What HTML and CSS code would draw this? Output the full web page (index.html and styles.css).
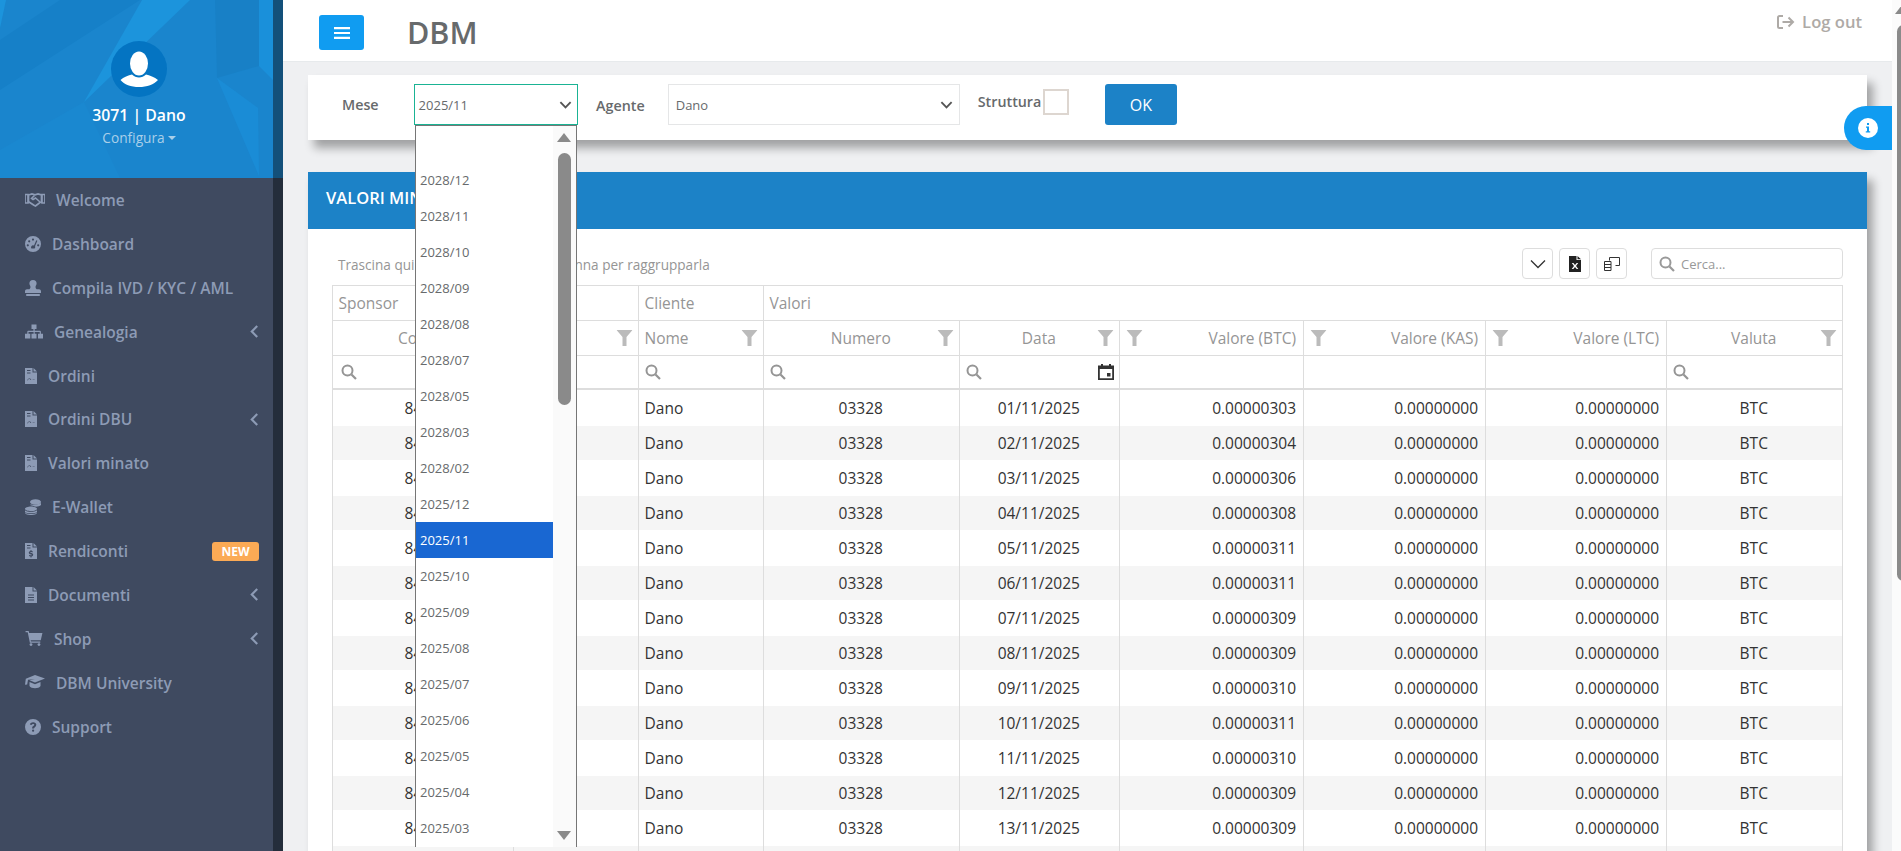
FILE: index.html
```html
<!DOCTYPE html>
<html lang="it">
<head>
<meta charset="utf-8">
<title>DBM</title>
<link rel="stylesheet" href="styles.css">
</head>
<body>
<aside class="sidebar">
  <div class="side-col">
    <div class="profile">
      <svg class="facets" viewBox="0 0 273 178" preserveAspectRatio="none" aria-hidden="true">
        <polygon points="142,0 190,0 84,102" fill="#1c94dc"/>
        <polygon points="0,0 6,0 0,28" fill="#1c94dc"/>
        <polygon points="217,78 258,108 259,176" fill="#1a8cd6"/>
        <polygon points="259,0 273,0 273,80 259,66" fill="#1a90da"/>
        <polygon points="0,90 140,0 60,0 0,40" fill="#1680c8"/>
        <polygon points="215,0 259,0 259,66 217,78" fill="#1880c6"/>
        <polygon points="0,150 84,102 120,178 0,178" fill="#1a88d0"/>
      </svg>
      <div class="avatar">
        <svg viewBox="0 0 56 56" width="56" height="56" aria-hidden="true"><ellipse cx="28" cy="22.500" rx="9" ry="12" fill="#fff"/><path d="M9.500 39c3-3 8-4.500 11.500-5.500 2 2 4.500 3 7 3s5-1 7-3c3.500 1 8.500 2.500 12 5.500-4 4.500-11 7-19 7s-15-2.500-18.500-7z" fill="#fff"/></svg>
      </div>
      <div class="user-name">3071 | Dano</div>
      <div class="user-conf">Configura<span class="caret"></span></div>
    </div>
    <nav class="menu">
      <a class="item"><svg class="ic w20" viewBox="0 0 20 14"><path d="M0 2h3v8.500H0zM17 2h3v8.500h-3zM3.500 2.500 7 1.500l3 .8 3-.8 3.500 1v7l-1.500.5-4.500 3.500-1.500-.8-5-3.200-.5-.5z" fill="none" stroke="currentColor" stroke-width="1.700"/><path d="m9.500 3-3 3 1.500 1 2.500-1.500 4.500 4" fill="none" stroke="currentColor" stroke-width="1.500"/></svg><span>Welcome</span></a>
      <a class="item"><svg class="ic w16" viewBox="0 0 16 16"><path fill-rule="evenodd" d="M8 0a8 8 0 1 1 0 16A8 8 0 0 1 8 0zM8 2.500a1.100 1.100 0 1 0 0 2.200 1.100 1.100 0 0 0 0-2.200zM4.200 4.200a1.100 1.100 0 1 0 0 2.200 1.100 1.100 0 0 0 0-2.200zM2.800 8.200a1.100 1.100 0 1 0 0 2.200 1.100 1.100 0 0 0 0-2.200zM13.200 8.200a1.100 1.100 0 1 0 0 2.200 1.100 1.100 0 0 0 0-2.200zM11.300 4.300 9 9.500a2 2 0 0 0-2.600 2.900h3.200a2 2 0 0 0 .5-2.300l2.300-5.300z"/></svg><span>Dashboard</span></a>
      <a class="item"><svg class="ic w16" viewBox="0 0 16 16"><path d="M8 0a3.600 3.600 0 0 1 3.600 3.600c0 1.400-1 2.200-1.100 3.400 0 .8.500 1.700 1.100 2.200H14c1.100 0 2 .9 2 2V13H0v-1.800c0-1.100.9-2 2-2h2.400c.6-.5 1.100-1.400 1.100-2.200C5.400 5.800 4.400 5 4.400 3.600A3.600 3.600 0 0 1 8 0zM1.200 14h13.600v2H1.200z"/></svg><span>Compila IVD / KYC / AML</span></a>
      <a class="item"><svg class="ic w18" viewBox="0 0 18 14"><path d="M6.500 0h5v4.500H9.700v1.800H15c.5 0 .9.400.9.900v2h2.100V14h-5V9.200h1.700V7.500H9.700v1.700h1.800V14h-5V9.200h2.100V7.500H3.500v1.700h1.800V14H0V9.200h2.300v-2c0-.5.400-.9.900-.9h5.200V4.500H6.500z"/></svg><span>Genealogia</span><svg class="chev" viewBox="0 0 8 12"><path d="M6.500 1 1.500 6l5 5" fill="none" stroke="currentColor" stroke-width="2"/></svg></a>
      <a class="item"><svg class="ic w12" viewBox="0 0 12 16"><path fill-rule="evenodd" d="M0 0h7.500v4.500H12V16H0zM2 2v1h3.500V2zM2 4.500v1h3.500v-1zM2.500 12.500c1-1.500 1.500-2 2-1.800.5.300.5 1.200 1.200 1.200.6 0 1-.6 1.700-.6l2.100.2v-.5H8c-.8 0-1.200.4-1.800.4-.6 0-.6-1-1.500-1.200-.9-.2-1.700.7-2.600 2.100z"/><path d="M8.500 0 12 3.500H8.500z"/></svg><span>Ordini</span></a>
      <a class="item"><svg class="ic w12" viewBox="0 0 12 16"><path fill-rule="evenodd" d="M0 0h7.500v4.500H12V16H0zM2 2v1h3.500V2zM2 4.500v1h3.500v-1zM2.500 12.500c1-1.500 1.500-2 2-1.800.5.300.5 1.200 1.200 1.200.6 0 1-.6 1.700-.6l2.100.2v-.5H8c-.8 0-1.200.4-1.800.4-.6 0-.6-1-1.500-1.200-.9-.2-1.700.7-2.600 2.100z"/><path d="M8.500 0 12 3.500H8.500z"/></svg><span>Ordini DBU</span><svg class="chev" viewBox="0 0 8 12"><path d="M6.500 1 1.500 6l5 5" fill="none" stroke="currentColor" stroke-width="2"/></svg></a>
      <a class="item"><svg class="ic w12" viewBox="0 0 12 16"><path fill-rule="evenodd" d="M0 0h7.500v4.500H12V16H0zM2 2v1h3.500V2zM2 4.500v1h3.500v-1zM2.500 12.500c1-1.500 1.500-2 2-1.800.5.300.5 1.200 1.200 1.200.6 0 1-.6 1.700-.6l2.100.2v-.5H8c-.8 0-1.200.4-1.800.4-.6 0-.6-1-1.500-1.200-.9-.2-1.700.7-2.600 2.100z"/><path d="M8.500 0 12 3.500H8.500z"/></svg><span>Valori minato</span></a>
      <a class="item"><svg class="ic w16" viewBox="0 0 16 16"><ellipse cx="10.500" cy="3" rx="5.500" ry="2.800"/><path d="M5.500 5.200c2.800 1 6.500.8 10.500-1.200v2c-1.500 1.300-4 2-6.500 1.600-1-.8-2.500-1.300-4-1.400zM6 7.500c3 0 6 1 6 2.300s-2.700 2.400-6 2.400-6-1.100-6-2.400 3-2.300 6-2.300zM0 11.200c2 2.300 9.500 2.300 12 0v1.800c-1 1.800-11 1.800-12 0zM0 13.500c2.300 2 9.700 2 12 0V14c-1 2.700-11 2.700-12 0z"/></svg><span>E-Wallet</span></a>
      <a class="item"><svg class="ic w12" viewBox="0 0 12 16"><path fill-rule="evenodd" d="M0 0h7.500v4.500H12V16H0zM2 2v1h3.500V2zM2 4.500v1h3.500v-1zM5.500 7v1c-1.200.2-1.700 1-1.700 1.700 0 1.700 3 1.500 3 2.300 0 .5-1.400.4-2.500-.2l-.3 1.100c.5.300 1 .4 1.500.5v1h1v-1c1.200-.2 1.700-1 1.700-1.700 0-1.700-3-1.600-3-2.400 0-.5 1.300-.4 2.300.1l.3-1.100a5 5 0 0 0-1.300-.3V7z"/><path d="M8.500 0 12 3.500H8.500z"/></svg><span>Rendiconti</span><b class="badge">NEW</b></a>
      <a class="item"><svg class="ic w12" viewBox="0 0 12 16"><path fill-rule="evenodd" d="M0 0h7.500v4.500H12V16H0zM3 7.500v1h6v-1zM3 10v1h6v-1zM3 12.500v1h6v-1z"/><path d="M8.500 0 12 3.500H8.500z"/></svg><span>Documenti</span><svg class="chev" viewBox="0 0 8 12"><path d="M6.500 1 1.500 6l5 5" fill="none" stroke="currentColor" stroke-width="2"/></svg></a>
      <a class="item"><svg class="ic w18" viewBox="0 0 18 16"><path d="M0 0h3.300l.5 2H18l-1.800 7.800H5.400l.3 1.400h10v1.300H4.600L2.300 1.300H0z"/><circle cx="5.800" cy="14.500" r="1.500"/><circle cx="14.300" cy="14.500" r="1.500"/></svg><span>Shop</span><svg class="chev" viewBox="0 0 8 12"><path d="M6.500 1 1.500 6l5 5" fill="none" stroke="currentColor" stroke-width="2"/></svg></a>
      <a class="item"><svg class="ic w20" viewBox="0 0 20 15"><path d="M10 0 20 3.500 10 7.500 4.500 5.300 10 4.200 3 4.800 2.200 9.500l-2.200.3.800-6zM4.500 7l5.500 2.200L15.500 7v4c-1.500 3-9.500 3-11 0z"/></svg><span>DBM University</span></a>
      <a class="item"><svg class="ic w16" viewBox="0 0 16 16"><path fill-rule="evenodd" d="M8 0a8 8 0 1 1 0 16A8 8 0 0 1 8 0zM8.200 3.200c-2 0-3 1-3.300 2.200l1.600.7c.3-.8.800-1.200 1.600-1.200.7 0 1.200.4 1.200.9 0 1.100-2.200 1.200-2.200 3.300v.4h1.900c0-1.400 2.300-1.500 2.300-3.800 0-1.500-1.400-2.500-3.100-2.500zM8.100 10.600a1.100 1.100 0 1 0 0 2.200 1.100 1.100 0 0 0 0-2.200z"/></svg><span>Support</span></a>
    </nav>
  </div>
  <div class="side-strip"></div>
</aside>

<div class="main">
  <header class="topbar">
    <button class="burger" aria-label="Menu"><svg viewBox="0 0 16 12" width="16" height="12"><path d="M0 0h16v2.200H0zM0 4.900h16v2.200H0zM0 9.800h16V12H0z" fill="#fff"/></svg></button>
    <h1 class="brand">DBM</h1>
    <a class="logout"><svg viewBox="0 0 18 14" width="18" height="14"><path d="M6 1H2.500C1.600 1 1 1.600 1 2.500v9c0 .9.600 1.500 1.500 1.500H6" fill="none" stroke="currentColor" stroke-width="2"/><path d="M5.500 7H16M11.500 2.500 16 7l-4.500 4.500" fill="none" stroke="currentColor" stroke-width="2"/></svg><span>Log out</span></a>
  </header>

  <div class="content">
    <section class="filters">
      <label class="f-mese">Mese</label>
      <div class="select select-active"><span>2025/11</span><svg class="sel-chev" viewBox="0 0 14 8"><path d="M1.500 1 7 6.500 12.500 1" fill="none" stroke="currentColor" stroke-width="2"/></svg></div>
      <label class="f-agente">Agente</label>
      <div class="select select-agent"><span>Dano</span><svg class="sel-chev" viewBox="0 0 14 8"><path d="M1.500 1 7 6.500 12.500 1" fill="none" stroke="currentColor" stroke-width="2"/></svg></div>
      <label class="f-strut">Struttura</label>
      <span class="check"></span>
      <button class="ok">OK</button>
    </section>

    <section class="panel">
      <h2 class="panel-head">VALORI MINATO</h2>
      <div class="toolbar">
        <p class="hint">Trascina qui l'intestazione di una colonna per raggrupparla</p>
        <div class="tools">
          <button class="tool"><svg viewBox="0 0 16 10" width="16" height="10"><path d="M1 1.500 8 8.500l7-7" fill="none" stroke="#333" stroke-width="1.300"/></svg></button>
          <button class="tool"><svg viewBox="0 0 12 16" width="12" height="16"><path fill-rule="evenodd" d="M0 0h7.500v4H12v12H0zM8.500 0 12 3.200H8.500zM2.800 7l2.200 3-2.300 3h1.600L6 11l1.700 2h1.600L7 10l2.200-3H7.700L6 9 4.400 7z" fill="#222"/></svg></button>
          <button class="tool"><svg viewBox="0 0 16 14" width="16" height="14"><path d="M5.500 3.500V.5h10v8h-4M.5 4.500h6.500v9H.5zM.5 7.500H7M.5 10.500H7" fill="none" stroke="#333"/></svg></button>
        </div>
        <div class="search"><svg class="lens" viewBox="0 0 16 16"><circle cx="6.500" cy="6.500" r="5" fill="none" stroke="currentColor" stroke-width="2"/><path d="m10.500 10.500 4.500 4.500" stroke="currentColor" stroke-width="2.200"/></svg><span>Cerca...</span></div>
      </div>

      <table class="grid">
        <colgroup><col class="c1"><col class="c2"><col class="c3"><col class="c4"><col class="c5"><col class="c6"><col class="c7"><col class="c8"><col class="c9"></colgroup>
        <thead>
          <tr class="band"><th colspan="2">Sponsor</th><th>Cliente</th><th colspan="6">Valori</th></tr>
          <tr class="heads">
            <th class="ctr">Codice<svg class="fn fr" viewBox="0 0 16 16"><use href="#funnel"/></svg></th>
            <th class="lft">Nome<svg class="fn fr" viewBox="0 0 16 16"><use href="#funnel"/></svg></th>
            <th class="lft">Nome<svg class="fn fr" viewBox="0 0 16 16"><use href="#funnel"/></svg></th>
            <th class="ctr">Numero<svg class="fn fr" viewBox="0 0 16 16"><use href="#funnel"/></svg></th>
            <th class="ctr">Data<svg class="fn fr" viewBox="0 0 16 16"><use href="#funnel"/></svg></th>
            <th class="rgt">Valore (BTC)<svg class="fn fl" viewBox="0 0 16 16"><use href="#funnel"/></svg></th>
            <th class="rgt">Valore (KAS)<svg class="fn fl" viewBox="0 0 16 16"><use href="#funnel"/></svg></th>
            <th class="rgt">Valore (LTC)<svg class="fn fl" viewBox="0 0 16 16"><use href="#funnel"/></svg></th>
            <th class="ctr">Valuta<svg class="fn fr" viewBox="0 0 16 16"><use href="#funnel"/></svg></th>
          </tr>
          <tr class="finds">
            <td><svg class="lens" viewBox="0 0 16 16"><use href="#lens"/></svg></td>
            <td><svg class="lens" viewBox="0 0 16 16"><use href="#lens"/></svg></td>
            <td><svg class="lens" viewBox="0 0 16 16"><use href="#lens"/></svg></td>
            <td><svg class="lens" viewBox="0 0 16 16"><use href="#lens"/></svg></td>
            <td><svg class="lens" viewBox="0 0 16 16"><use href="#lens"/></svg><svg class="cal" viewBox="0 0 16 16"><path fill-rule="evenodd" d="M3 0h2v1.500h6V0h2v1.500h3V16H0V1.500h3zM1.800 5v9.200h12.400V5zM9 9h3.500v3.500H9z" fill="#333"/></svg></td>
            <td></td><td></td><td></td>
            <td><svg class="lens" viewBox="0 0 16 16"><use href="#lens"/></svg></td>
          </tr>
        </thead>
        <tbody>
          <tr><td class="ctr">8421</td><td>Dano</td><td>Dano</td><td class="ctr">03328</td><td class="ctr">01/11/2025</td><td class="rgt">0.00000303</td><td class="rgt">0.00000000</td><td class="rgt">0.00000000</td><td class="ctr">BTC</td></tr>
          <tr><td class="ctr">8421</td><td>Dano</td><td>Dano</td><td class="ctr">03328</td><td class="ctr">02/11/2025</td><td class="rgt">0.00000304</td><td class="rgt">0.00000000</td><td class="rgt">0.00000000</td><td class="ctr">BTC</td></tr>
          <tr><td class="ctr">8421</td><td>Dano</td><td>Dano</td><td class="ctr">03328</td><td class="ctr">03/11/2025</td><td class="rgt">0.00000306</td><td class="rgt">0.00000000</td><td class="rgt">0.00000000</td><td class="ctr">BTC</td></tr>
          <tr><td class="ctr">8421</td><td>Dano</td><td>Dano</td><td class="ctr">03328</td><td class="ctr">04/11/2025</td><td class="rgt">0.00000308</td><td class="rgt">0.00000000</td><td class="rgt">0.00000000</td><td class="ctr">BTC</td></tr>
          <tr><td class="ctr">8421</td><td>Dano</td><td>Dano</td><td class="ctr">03328</td><td class="ctr">05/11/2025</td><td class="rgt">0.00000311</td><td class="rgt">0.00000000</td><td class="rgt">0.00000000</td><td class="ctr">BTC</td></tr>
          <tr><td class="ctr">8421</td><td>Dano</td><td>Dano</td><td class="ctr">03328</td><td class="ctr">06/11/2025</td><td class="rgt">0.00000311</td><td class="rgt">0.00000000</td><td class="rgt">0.00000000</td><td class="ctr">BTC</td></tr>
          <tr><td class="ctr">8421</td><td>Dano</td><td>Dano</td><td class="ctr">03328</td><td class="ctr">07/11/2025</td><td class="rgt">0.00000309</td><td class="rgt">0.00000000</td><td class="rgt">0.00000000</td><td class="ctr">BTC</td></tr>
          <tr><td class="ctr">8421</td><td>Dano</td><td>Dano</td><td class="ctr">03328</td><td class="ctr">08/11/2025</td><td class="rgt">0.00000309</td><td class="rgt">0.00000000</td><td class="rgt">0.00000000</td><td class="ctr">BTC</td></tr>
          <tr><td class="ctr">8421</td><td>Dano</td><td>Dano</td><td class="ctr">03328</td><td class="ctr">09/11/2025</td><td class="rgt">0.00000310</td><td class="rgt">0.00000000</td><td class="rgt">0.00000000</td><td class="ctr">BTC</td></tr>
          <tr><td class="ctr">8421</td><td>Dano</td><td>Dano</td><td class="ctr">03328</td><td class="ctr">10/11/2025</td><td class="rgt">0.00000311</td><td class="rgt">0.00000000</td><td class="rgt">0.00000000</td><td class="ctr">BTC</td></tr>
          <tr><td class="ctr">8421</td><td>Dano</td><td>Dano</td><td class="ctr">03328</td><td class="ctr">11/11/2025</td><td class="rgt">0.00000310</td><td class="rgt">0.00000000</td><td class="rgt">0.00000000</td><td class="ctr">BTC</td></tr>
          <tr><td class="ctr">8421</td><td>Dano</td><td>Dano</td><td class="ctr">03328</td><td class="ctr">12/11/2025</td><td class="rgt">0.00000309</td><td class="rgt">0.00000000</td><td class="rgt">0.00000000</td><td class="ctr">BTC</td></tr>
          <tr><td class="ctr">8421</td><td>Dano</td><td>Dano</td><td class="ctr">03328</td><td class="ctr">13/11/2025</td><td class="rgt">0.00000309</td><td class="rgt">0.00000000</td><td class="rgt">0.00000000</td><td class="ctr">BTC</td></tr>
          <tr><td class="ctr">8421</td><td>Dano</td><td>Dano</td><td class="ctr">03328</td><td class="ctr">14/11/2025</td><td class="rgt">0.00000309</td><td class="rgt">0.00000000</td><td class="rgt">0.00000000</td><td class="ctr">BTC</td></tr>
        </tbody>
      </table>
    </section>
  </div>

  <a class="info-tab"><svg viewBox="0 0 20 20" width="20" height="20"><circle cx="10" cy="10" r="10" fill="#fff"/><path d="M9 5h2v1.900H9zM8 8.500h3v4.800h1.200v1.300H7.800v-1.300H9V9.800H8z" fill="#109cf1"/></svg></a>

  <div class="dropdown">
    <ul class="options">
      <li></li><li>2028/12</li><li>2028/11</li><li>2028/10</li><li>2028/09</li><li>2028/08</li><li>2028/07</li><li>2028/05</li><li>2028/03</li><li>2028/02</li><li>2025/12</li><li class="sel">2025/11</li><li>2025/10</li><li>2025/09</li><li>2025/08</li><li>2025/07</li><li>2025/06</li><li>2025/05</li><li>2025/04</li><li>2025/03</li>
    </ul>
    <div class="dd-bar"><i class="arrow-up"></i><i class="dd-thumb"></i><i class="arrow-down"></i></div>
  </div>
</div>

<div class="page-bar"><i class="pb-arrow"></i><i class="pb-thumb"></i></div>

<svg class="defs" aria-hidden="true">
  <symbol id="funnel" viewBox="0 0 16 16"><path d="M0 0h16L10 7v9H6V7z" fill="#bbb"/></symbol>
  <symbol id="lens" viewBox="0 0 16 16"><circle cx="6.500" cy="6.500" r="5" fill="none" stroke="#959595" stroke-width="2"/><path d="m10.500 10.500 4.500 4.500" stroke="#959595" stroke-width="2.200"/></symbol>
</svg>
</body>
</html>
```

FILE: styles.css
```css
* { box-sizing: border-box; }
html, body { margin: 0; height: 100%; overflow: hidden; }
body { display: flex; font-family: "Open Sans", "Liberation Sans", sans-serif; font-size: 14px; color: #333; background: #eff0f2; }

.defs { display: none; }

/* Sidebar */
.sidebar { width: 283px; flex: none; display: flex; height: 100vh; }
.side-col { width: 273px; display: flex; flex-direction: column; background: #3f4a60; }
.side-strip { width: 10px; background: linear-gradient(#13507a 178px, #242d3b 178px); }

.profile { position: relative; height: 178px; background: #1a85cd; display: flex; flex-direction: column; align-items: center; overflow: hidden; color: #fff; padding-left: 5px; }
.facets { position: absolute; inset: 0; width: 100%; height: 100%; }
.avatar { position: relative; margin-top: 41px; width: 56px; height: 56px; border-radius: 50%; background: #0474c2; }
.user-name { position: relative; margin-top: 8px; font-size: 15.800px; font-weight: 600; line-height: 20px; }
.user-conf { position: relative; margin-top: 4px; font-size: 13.700px; line-height: 18px; color: #a9cfe9; display: flex; align-items: center; }
.caret { margin-left: 3px; border: 4px solid transparent; border-top-color: #a9cfe9; border-bottom: 0; }

.item { height: 43.900px; display: flex; align-items: center; gap: 11px; padding: 0 14px 0 25px; font-size: 15.500px; font-weight: 600; color: #8d9bb5; }
.ic { flex: none; fill: currentColor; }
.w12 { width: 12px; height: 16px; }
.w16 { width: 16px; height: 16px; }
.w18 { width: 18px; height: 15px; }
.w20 { width: 20px; height: 15px; }
.chev { margin-left: auto; width: 9px; height: 13px; flex: none; }
.badge { margin-left: auto; width: 47px; height: 19px; background: #fbaa55; color: #fff; border-radius: 3px; font-size: 12px; font-weight: 700; line-height: 19px; text-align: center; }

/* Main */
.main { position: relative; flex: 1; min-width: 0; display: flex; flex-direction: column; height: 100vh; overflow: hidden; }
.topbar { flex: none; height: 62px; background: #fff; border-bottom: 1px solid #e7eaec; display: flex; align-items: flex-start; padding: 15px 30px 0 36px; }
.burger { width: 45px; height: 35px; border: 0; border-radius: 3px; background: #109cf1; display: flex; align-items: center; justify-content: center; padding: 0; }
.brand { margin: -3px 0 0 43px; font-size: 30.500px; font-weight: 600; line-height: 41px; color: #676a6c; }
.logout { margin-left: auto; margin-top: -4px; display: flex; align-items: center; gap: 7px; font-size: 16.600px; font-weight: 600; line-height: 22px; color: #aeaaa6; }

.content { flex: 1; padding: 13px 25px 0; min-height: 0; }

.filters { height: 65px; background: #fff; box-shadow: 6px 8px 9px rgba(0, 0, 0, .33); display: flex; align-items: flex-start; padding-top: 9px; }
.filters label { font-size: 14.300px; font-weight: 600; color: #676a6c; line-height: 18px; }
.f-mese { margin: 12px 35.500px 0 34px; }
.f-agente { margin: 13px 23px 0 18px; }
.f-strut { margin: 9px 0 0 18px; }
.select { height: 41px; width: 164px; border: 1px solid #e5e6e7; display: flex; align-items: center; justify-content: space-between; padding: 0 5px 0 3.500px; font-size: 13px; color: #676a6c; flex: none; }
.select-active { border-color: #1ab394; }
.select-agent { width: 292px; padding: 0 6px 0 7px; }
.sel-chev { width: 13px; height: 8px; color: #555; }
.check { width: 26px; height: 26px; border: 2px solid #ddd6d0; margin: 5px 0 0 1.500px; flex: none; }
.ok { margin-left: 36px; width: 72px; height: 41px; border: 0; border-radius: 3px; background: #1c82c7; color: #fff; font: 16px "Open Sans", sans-serif; padding: 0; }

.panel { margin-top: 32px; background: #fff; box-shadow: 6px 8px 9px rgba(0, 0, 0, .33); height: 800px; }
.panel-head { margin: 0; height: 57px; background: #1c82c7; color: #fff; font-size: 16.500px; font-weight: 600; line-height: 52px; padding-left: 18px; }

.toolbar { margin: 19px 24px 6px; display: flex; align-items: center; height: 31px; }
.hint { margin: 0 auto 0 6px; font-size: 13.600px; color: #959595; padding-top: 2px; }
.tools { display: flex; gap: 6px; margin-right: 24px; }
.tool { width: 31px; height: 31px; padding: 0; border: 1px solid #ddd; border-radius: 4px; background: #fff; display: flex; align-items: center; justify-content: center; }
.search { width: 192px; height: 31px; border: 1px solid #ddd; border-radius: 4px; display: flex; align-items: center; gap: 6px; padding-left: 7px; font-size: 13px; color: #999; }
.search .lens { color: #999; }
.lens { width: 16px; height: 16px; display: block; flex: none; }
.finds td:first-child .lens { margin-left: 2px; }

.grid { border-collapse: collapse; table-layout: fixed; width: 1510px; margin-left: 24px; font-size: 15.500px; }
.c1 { width: 181px; } .c2 { width: 125px; } .c3 { width: 125px; } .c4 { width: 196px; } .c5 { width: 160px; }
.c6 { width: 184px; } .c7 { width: 182px; } .c8 { width: 181px; } .c9 { width: 176px; }
.grid th, .grid td { border: 1px solid #ddd; padding: 0 7px 0 5.500px; font-weight: 400; text-align: left; position: relative; }
.grid thead th { color: #959595; }
.band { height: 35px; }
.heads { height: 35px; }
.finds { height: 33px; }
.finds td { border-bottom-width: 2px; }
.finds .cal { position: absolute; right: 5px; top: 8px; width: 16px; height: 16px; }
.grid tbody tr { height: 34px; }
.grid tbody tr:nth-child(odd) { height: 36px; }
.grid tbody tr:first-child { height: 37px; }
.grid tbody td { border-top: 0; border-bottom: 0; line-height: 20px; }
.grid tbody tr:nth-child(even) { background: #f5f5f5; }
.grid .ctr { text-align: center; }
.grid .rgt { text-align: right; }
.fn { position: absolute; top: 9px; width: 17px; height: 16px; }
.fr { right: 5px; }
.fl { left: 6px; }

/* Info tab */
.info-tab { position: absolute; right: 0; top: 106px; width: 48px; height: 44px; border-radius: 22px 0 0 22px; background: #109cf1; display: flex; align-items: center; justify-content: center; }

/* Open select list */
.dropdown { position: absolute; left: 132px; top: 125px; width: 162px; height: 722px; border: solid #767676; border-width: 1px 1px 0 1px; background: #fff; display: flex; overflow: hidden; }
.options { list-style: none; margin: 0; padding: 0; flex: 1; min-width: 0; font-size: 13px; color: #676a6c; }
.options li { height: 36px; line-height: 36px; padding-left: 4px; }
.options .sel { background: #1967d2; color: #fff; }
.dd-bar { position: relative; width: 23px; flex: none; background: #fafafa; }
.dd-thumb { position: absolute; left: 5px; top: 27px; width: 13px; height: 252px; border-radius: 7px; background: #8a8a8a; }
.arrow-up { position: absolute; left: 4px; top: 7px; border: 7.500px solid transparent; border-top: 0; border-bottom: 9px solid #8a8a8a; }
.arrow-down { position: absolute; left: 4px; bottom: 7px; border: 7.500px solid transparent; border-bottom: 0; border-top: 9px solid #8a8a8a; }

/* Page scrollbar */
.page-bar { width: 9px; flex: none; position: relative; background: #fbfbfb; height: 100vh; overflow: hidden; }
.pb-thumb { position: absolute; left: 5px; top: 25px; width: 13px; height: 556px; border-radius: 7px; background: #8a8a8a; }
.pb-arrow { position: absolute; left: 3px; top: 5px; border: 7.500px solid transparent; border-top: 0; border-bottom: 9px solid #8a8a8a; }
```
